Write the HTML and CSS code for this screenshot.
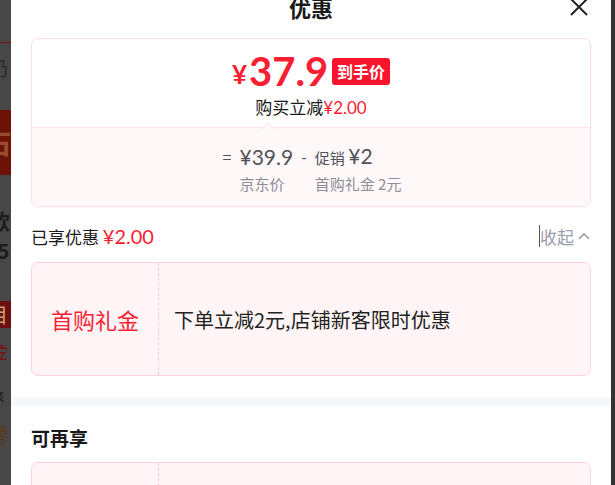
FILE: index.html
```html
<!DOCTYPE html>
<html>
    <head>
        <meta charset="utf-8">
        <link rel="stylesheet" href="styles.css">
    </head>
    <body>
        <div class="backdrop">
            <div class="peek">
                <div class="peek-row peek-top"></div>
                <div class="peek-row peek-text">奶</div>
                <div class="peek-row peek-red">占</div>
                <div class="peek-row peek-gap1"></div>
                <div class="peek-row peek-bold">款</div>
                <div class="peek-row peek-bold peek-five">5</div>
                <div class="peek-row peek-gap2"></div>
                <div class="peek-row peek-tag">目</div>
                <div class="peek-row peek-gold">金</div>
                <div class="peek-row peek-thin">衤</div>
                <div class="peek-row peek-brown">榜</div>
            </div>
            <div class="sheet">
                <div class="sheet-head">
                    <h1>优惠</h1>
                    <svg class="close" width="20" height="20" viewBox="0 0 20 20">
                        <path d="M2 1 L18 17 M18 1 L2 17" stroke="#222" stroke-width="2" fill="none"/>
                    </svg>
                </div>
                <div class="summary">
                    <div class="summary-top">
                        <div class="final">
                            <span class="yen">¥</span><span class="amount">37.9</span>
                            <span class="final-tag">到手价</span>
                        </div>
                        <div class="cut">购买立减<span class="red">¥2.00</span></div>
                    </div>
                    <div class="summary-bottom">
                        <div class="formula">
                            <span class="op">=</span>
                            <span class="num">¥39.9</span>
                            <span class="op">-</span>
                            <span><span class="small">促销</span> <span class="num">¥2</span></span>
                            <span></span>
                            <span class="label">京东价</span>
                            <span></span>
                            <span class="label">首购礼金 2元</span>
                        </div>
                    </div>
                </div>
                <div class="enjoyed">
                    <div>已享优惠 <span class="red big">¥2.00</span></div>
                    <div class="fold"><span class="caret"></span>收起
                        <svg width="14" height="10" viewBox="0 0 14 10"><path d="M2 8 L7 3 L12 8" stroke="#9a9dab" stroke-width="1.6" fill="none"/></svg>
                    </div>
                </div>
                <div class="coupon">
                    <div class="coupon-kind">首购礼金</div>
                    <div class="coupon-desc">下单立减2元,店铺新客限时优惠</div>
                </div>
                <div class="divider"></div>
                <h2>可再享</h2>
                <div class="coupon">
                    <div class="coupon-kind"></div>
                    <div class="coupon-desc"></div>
                </div>
            </div>
            <div class="edge"></div>
        </div>
    </body>
</html>
```
FILE: styles.css
```css
body{
    margin:0;
    font-family:"Noto Sans CJK SC","Noto Sans",sans-serif;
    overflow:hidden;
}
.backdrop{
    display:flex;
    height:485px;
    background:#474747;
}
.peek{
    width:11px;
    overflow:hidden;
    flex:none;
    color:#1c1c1c;
}
.peek-row{
    overflow:hidden;
    white-space:nowrap;
    font-size:20px;
}
.peek-top{
    height:42px;
    border-bottom:1px solid #7a1414;
}
.peek-text{
    height:67px;
    line-height:50px;
    text-indent:-12px;
    color:#2a2a2a;
}
.peek-red{
    height:65px;
    line-height:60px;
    background:#6c1207;
    color:#9a4a30;
    font-weight:bold;
    font-size:30px;
    text-indent:-18px;
}
.peek-gap1{
    height:30px;
}
.peek-bold{
    height:30px;
    line-height:30px;
    font-weight:bold;
    font-size:21px;
    text-indent:-11px;
}
.peek-five{
    text-indent:-3px;
}
.peek-gap2{
    height:36px;
}
.peek-tag{
    height:27px;
    line-height:27px;
    background:#6b0f10;
    color:#c8a070;
    text-indent:-12px;
}
.peek-gold{
    height:45px;
    line-height:46px;
    color:#7a0d10;
    text-indent:-12px;
}
.peek-thin{
    height:45px;
    line-height:50px;
    color:#222;
    text-indent:-8px;
}
.peek-brown{
    height:35px;
    line-height:34px;
    color:#5a3a14;
    text-indent:-12px;
}
.sheet{
    width:600px;
    flex:none;
    background:white;
    color:#1a1a1a;
}
.edge{
    flex:1;
    background:#333;
}
.sheet-head{
    height:38px;
    display:flex;
    justify-content:center;
    position:relative;
}
h1{
    margin:-7px 0 0 0;
    font-size:22px;
    line-height:28px;
    font-weight:bold;
    color:#1a1a1a;
}
.close{
    position:absolute;
    right:22px;
    top:-2px;
}
.summary{
    margin:0 20px;
    border:1px solid #ffdbe3;
    border-radius:7px;
    overflow:hidden;
}
.summary-top{
    height:88px;
    display:flex;
    flex-direction:column;
    align-items:center;
    border-bottom:1px solid #ffe6ec;
    position:relative;
}
.summary-top:after{
    content:"";
    position:absolute;
    bottom:-1px;
    left:232px;
    width:8px;
    height:8px;
    background:#fff8f9;
    border-left:1px solid #ffe2e9;
    border-top:1px solid #ffe2e9;
    transform:translateY(5px) rotate(45deg);
}
.final{
    display:flex;
    align-items:center;
    margin-top:12px;
    height:40px;
    color:#fa1e32;
    font-family:"Lato","Noto Sans",sans-serif;
}
.yen{
    font-size:26px;
    font-weight:bold;
    margin-top:6px;
    margin-right:2px;
}
.amount{
    font-size:40px;
    font-weight:bold;
}
.final-tag{
    margin-left:4px;
    background:#f9132d;
    color:white;
    font-family:"Noto Sans CJK SC",sans-serif;
    font-size:16px;
    font-weight:bold;
    height:27px;
    line-height:27px;
    padding:0 5px;
    border-radius:3px;
}
.cut{
    font-size:17px;
    line-height:22px;
    margin-top:5px;
    color:#1a1a1a;
}
.red{
    color:#fa1e32;
    font-family:"Lato","Noto Sans CJK SC",sans-serif;
}
.summary-bottom{
    height:78px;
    background:#fff8f9;
    display:flex;
    justify-content:center;
}
.formula{
    margin-top:15px;
    margin-left:2px;
    display:grid;
    grid-template-columns:auto auto auto auto;
    grid-template-rows:26px 20px;
    column-gap:8px;
    row-gap:5px;
    align-items:center;
    align-self:flex-start;
    color:#50525a;
}
.formula .num{
    font-family:"Lato","Noto Sans",sans-serif;
    font-size:21px;
}
.formula .op{
    font-size:16px;
}
.formula .small{
    font-size:15px;
}
.formula .label{
    font-size:15px;
    line-height:20px;
    color:#8c8d96;
}
.enjoyed{
    display:flex;
    justify-content:space-between;
    align-items:center;
    margin:16px 20px 0 20px;
    height:26px;
    font-size:17px;
}
.enjoyed .big{
    font-size:20px;
}
.fold{
    display:flex;
    align-items:center;
    gap:3px;
    color:#9a9dab;
    font-size:17px;
}
.caret{
    width:1px;
    height:22px;
    background:#555;
    margin-right:-3px;
}
.coupon{
    margin:13px 20px 0 20px;
    height:112px;
    display:flex;
    background:#fff5f6;
    border:1px solid #ffd3dc;
    border-radius:7px;
}
.coupon-kind{
    width:126px;
    flex:none;
    border-right:1px dashed #ffc6d2;
    display:flex;
    align-items:center;
    justify-content:center;
    color:#fa1e32;
    font-size:22px;
}
.coupon-desc{
    display:flex;
    align-items:center;
    padding-left:15px;
    font-size:20px;
    color:#222;
}
.divider{
    height:9px;
    background:#f6f7fb;
    margin-top:21px;
}
h2{
    margin:20px 20px 0 20px;
    font-size:19px;
    line-height:24px;
    font-weight:bold;
}
h2 + .coupon{
    margin-top:12px;
}
```
